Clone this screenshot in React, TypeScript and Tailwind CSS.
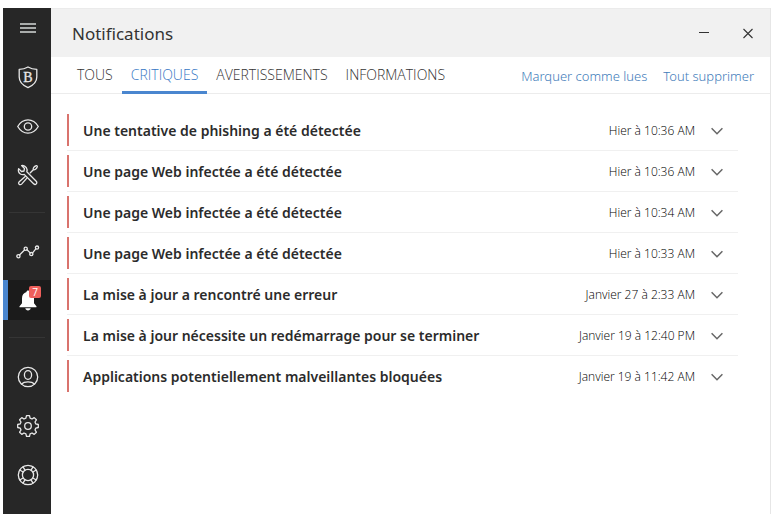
import React, { useState } from 'react';

interface IconProps {
  className?: string;
}

const line = {
  fill: 'none',
  stroke: 'currentColor',
  strokeLinecap: 'round' as const,
  strokeLinejoin: 'round' as const,
};

const MenuIcon: React.FC<IconProps> = ({ className }) => (
  <svg viewBox="0 0 16 12" className={className} aria-hidden="true">
    <path d="M0 2h16M0 6h16M0 10h16" stroke="#a9acab" strokeWidth="1.8" />
  </svg>
);

const ShieldIcon: React.FC<IconProps> = ({ className }) => (
  <svg viewBox="0 0 24 24" className={className} aria-hidden="true">
    <path d="M12 2C9.600 3.500 6.300 4.400 3.200 4.400V12c0 4.900 3.600 8.400 8.800 10.600 5.200-2.200 8.800-5.700 8.800-10.600V4.400C17.700 4.400 14.400 3.500 12 2z" {...line} strokeWidth="1.3" />
    <text x="12" y="16.700" textAnchor="middle" fill="currentColor" fontSize="14" fontWeight="400" stroke="currentColor" strokeWidth=".3" fontFamily="'Liberation Serif', serif">B</text>
  </svg>
);

const EyeIcon: React.FC<IconProps> = ({ className }) => (
  <svg viewBox="0 0 24 24" className={className} aria-hidden="true">
    <g {...line} strokeWidth="1.3">
      <path d="M1.700 12.500C4.200 8.300 7.800 5.900 12 5.900s7.800 2.400 10.300 6.600c-2.500 4.200-6.100 6.600-10.300 6.600s-7.800-2.400-10.300-6.600z" />
      <circle cx="12" cy="12.500" r="3.700" />
    </g>
  </svg>
);

const ToolsIcon: React.FC<IconProps> = ({ className }) => (
  <svg viewBox="0 0 24 24" className={className} aria-hidden="true">
    <g {...line} strokeWidth="1.3">
      <path d="M5.600 2.600l2.900 2.900-.5 2.500-2.500.5-2.900-2.900c-.6 2.400.2 4.400 1.800 5.400 1.200.8 2.600.8 3.800.4l9.400 9.400c.8.8 2 .8 2.700.1.700-.7.700-1.900-.1-2.700l-9.400-9.400c.5-1.400.3-2.900-.5-4.100-1.100-1.600-2.900-2.500-4.700-2.100z" />
      <path d="M14.300 9.700l3-3M17.300 6.700c-.5-1.400.7-3.200 3-4 .7-.2 1.200.3 1 1-.8 2.300-2.600 3.500-4 3z" />
      <path d="M9.200 13.400l-6 5.300c-.8.800-.8 1.800-.1 2.500s1.700.7 2.500-.1l5.300-6" />
    </g>
  </svg>
);

const ActivityIcon: React.FC<IconProps> = ({ className }) => (
  <svg viewBox="0 0 24 24" className={className} aria-hidden="true">
    <g {...line} strokeWidth="1.3">
      <path d="M3.500 15l5-5M11 9.700l3.200 3.200M16.600 12.800l3.200-4" />
      <circle cx="2.400" cy="16.200" r="1.600" />
      <circle cx="9.700" cy="8.800" r="1.600" />
      <circle cx="15.300" cy="14.100" r="1.600" />
      <circle cx="21" cy="7.600" r="1.600" />
    </g>
  </svg>
);

const BellIcon: React.FC<IconProps> = ({ className }) => (
  <svg viewBox="0 0 24 24" className={className} aria-hidden="true">
    <path d="M12 2.500c.9 0 1.500.6 1.500 1.400 3 .8 4.500 3.200 4.500 6.300v5l2.400 3c.4.6.1 1.100-.5 1.100H4.100c-.6 0-.9-.5-.5-1.100l2.400-3v-5c0-3.100 1.500-5.500 4.500-6.300 0-.8.6-1.400 1.500-1.400zM9.300 20.300h5.400c-.3 1.300-1.300 2.200-2.700 2.200s-2.400-.9-2.700-2.200z" fill="#fff" />
  </svg>
);

const AccountIcon: React.FC<IconProps> = ({ className }) => (
  <svg viewBox="0 0 24 24" className={className} aria-hidden="true">
    <g {...line} strokeWidth="1.3">
      <circle cx="12" cy="12" r="9.700" />
      <ellipse cx="12" cy="10" rx="3.600" ry="4.300" />
      <path d="M5.500 19c1.500-1.500 4-2.100 6.500-2.100s5 .6 6.500 2.100" />
    </g>
  </svg>
);

const GearIcon: React.FC<IconProps> = ({ className }) => (
  <svg viewBox="0 0 24 24" className={className} aria-hidden="true">
    <g {...line} strokeWidth="1.3">
      <path d="M10.500 1.700h3l.6 2.500 1.900.8 2.200-1.400 2.200 2.200-1.400 2.200.8 1.900 2.500.6v3l-2.500.6-.8 1.900 1.400 2.200-2.200 2.200-2.200-1.400-1.900.8-.6 2.500h-3l-.6-2.500-1.900-.8-2.200 1.400-2.200-2.200L5 16l-.8-1.900-2.500-.6v-3l2.500-.6L5 8 3.600 5.800l2.200-2.200L8 5l1.900-.8z" />
      <circle cx="12" cy="12" r="3.300" />
    </g>
  </svg>
);

const SupportIcon: React.FC<IconProps> = ({ className }) => (
  <svg viewBox="0 0 24 24" className={className} aria-hidden="true">
    <g {...line} strokeWidth="1.3">
      <circle cx="12" cy="12" r="9.700" />
      <circle cx="12" cy="12" r="5.600" />
      <path d="M7 3.800l2 3.300M3.800 7l3.300 2M17 3.800l-2 3.300M20.200 7l-3.300 2M7 20.200l2-3.300M3.800 17l3.300-2M17 20.200l-2-3.300M20.200 17l-3.300-2" />
    </g>
  </svg>
);

const ChevronIcon: React.FC<IconProps> = ({ className }) => (
  <svg viewBox="0 0 12 8" className={className} aria-hidden="true">
    <path d="M.6 1.300L6 6.700l5.400-5.400" fill="none" stroke="currentColor" strokeWidth="1.5" />
  </svg>
);

const navGroups = [
  {
    className: 'gap-[9px]',
    items: [
      { id: 'menu', label: 'Menu', icon: MenuIcon, size: 'w-4 h-3' },
      { id: 'protection', label: 'Protection', icon: ShieldIcon, size: 'w-6 h-6' },
      { id: 'privacy', label: 'Vie privée', icon: EyeIcon, size: 'w-6 h-6' },
      { id: 'tools', label: 'Outils', icon: ToolsIcon, size: 'w-6 h-6' },
    ],
  },
  {
    className: 'gap-2',
    items: [
      { id: 'activity', label: 'Activité', icon: ActivityIcon, size: 'w-6 h-6' },
      { id: 'notifications', label: 'Notifications', icon: BellIcon, size: 'w-6 h-6', badge: 7 },
    ],
  },
  {
    className: 'gap-[9px]',
    items: [
      { id: 'account', label: 'Compte', icon: AccountIcon, size: 'w-6 h-6' },
      { id: 'settings', label: 'Paramètres', icon: GearIcon, size: 'w-6 h-6' },
      { id: 'support', label: 'Assistance', icon: SupportIcon, size: 'w-6 h-6' },
    ],
  },
];

const tabs = ['TOUS', 'CRITIQUES', 'AVERTISSEMENTS', 'INFORMATIONS'];

const notifications = [
  { title: 'Une tentative de phishing a été détectée', date: 'Hier à 10:36 AM' },
  { title: 'Une page Web infectée a été détectée', date: 'Hier à 10:36 AM' },
  { title: 'Une page Web infectée a été détectée', date: 'Hier à 10:34 AM' },
  { title: 'Une page Web infectée a été détectée', date: 'Hier à 10:33 AM' },
  { title: 'La mise à jour a rencontré une erreur', date: 'Janvier 27 à 2:33 AM' },
  { title: 'La mise à jour nécessite un redémarrage pour se terminer', date: 'Janvier 19 à 12:40 PM' },
  { title: 'Applications potentiellement malveillantes bloquées', date: 'Janvier 19 à 11:42 AM' },
];

const Sidebar: React.FC = () => (
  <nav className="w-12 shrink-0 bg-[#272727] text-[#e8e8e8]">
    {navGroups.map((group, index) => (
      <React.Fragment key={index}>
        {index > 0 && <hr className="mx-1.5 mt-[17px] mb-[19px] border-t border-[#353535]" />}
        <div className={`flex flex-col ${group.className}`}>
          {group.items.map((item) => (
            <button
              key={item.id}
              type="button"
              aria-label={item.label}
              className={`flex h-10 w-full items-center justify-center border-l-5 pr-[3px] ${item.id === 'notifications' ? 'border-[#4a86cf] bg-[#1b1b1b]' : 'border-transparent'}`}
            >
              <span className="relative">
                <item.icon className={item.size} />
                {'badge' in item && (
                  <span className="absolute -top-0.5 -right-px flex h-3 w-3 items-center justify-center rounded-xs bg-[#ee5f5b] text-[10px] leading-3 text-white">
                    {item.badge}
                  </span>
                )}
              </span>
            </button>
          ))}
        </div>
      </React.Fragment>
    ))}
  </nav>
);

const App: React.FC = () => {
  const [activeTab, setActiveTab] = useState('CRITIQUES');

  return (
    <div className="flex min-h-screen bg-white pt-2 pr-2 pl-[3px] font-['Open_Sans','Noto_Sans',sans-serif]">
      <Sidebar />
      <main className="min-w-0 flex-1 border-r border-[#e6e6e6]">
        <header className="flex h-[49px] items-center justify-between border-t border-[#ebebeb] bg-[#f1f1f1] pt-0.5 pr-4 pl-[21px]">
          <h1 className="text-[17px] leading-6 text-[#333] font-['Noto_Sans',sans-serif]">Notifications</h1>
          <div className="flex items-center gap-8 text-[#333]">
            <button type="button" aria-label="Réduire">
              <svg viewBox="0 0 12 12" className="h-3 w-3"><path d="M1 4.500h10" stroke="currentColor" /></svg>
            </button>
            <button type="button" aria-label="Fermer">
              <svg viewBox="0 0 12 12" className="h-3 w-3"><path d="M1.500 1l9 9M10.500 1l-9 9" stroke="currentColor" strokeWidth="1.1" /></svg>
            </button>
          </div>
        </header>

        <div className="flex h-[37px] items-stretch justify-between border-b border-[#ececec] pr-4 pl-[17px] text-[14px] leading-5 font-light">
          <div className="flex" role="tablist">
            {tabs.map((tab) => (
              <button
                key={tab}
                type="button"
                role="tab"
                aria-selected={tab === activeTab}
                onClick={() => setActiveTab(tab)}
                className={`-mb-px border-b-3 px-[9px] pt-0.5 ${tab === activeTab ? 'border-[#4a86cf] text-[#3576c4]' : 'border-transparent text-[#333]'}`}
              >
                {tab}
              </button>
            ))}
          </div>
          <div className="flex items-center gap-4 pt-0.5 text-[13px] text-[#3f7dba] font-['Noto_Sans',sans-serif]">
            <button type="button">Marquer comme lues</button>
            <button type="button">Tout supprimer</button>
          </div>
        </div>

        <ul className="pt-4 pr-8 pl-4">
          {notifications.map((item, index) => (
            <li key={index} className="flex h-[41px] items-center border-b border-[#f0f0f0] last:border-transparent">
              <span className="h-8 w-0.5 bg-[#d9736d]" />
              <div className="flex flex-1 items-center pt-0.5 pr-[15px] pl-3.5">
                <h2 className="flex-1 text-[14px] leading-5 font-semibold text-[#2b2b2b] font-['Noto_Sans',sans-serif]">{item.title}</h2>
                <span className="text-[12px] leading-4 font-light text-black">{item.date}</span>
                <button type="button" aria-label="Afficher les détails" className="ml-4 text-[#666]">
                  <ChevronIcon className="h-2 w-3" />
                </button>
              </div>
            </li>
          ))}
        </ul>
      </main>
    </div>
  );
};

export default App;
